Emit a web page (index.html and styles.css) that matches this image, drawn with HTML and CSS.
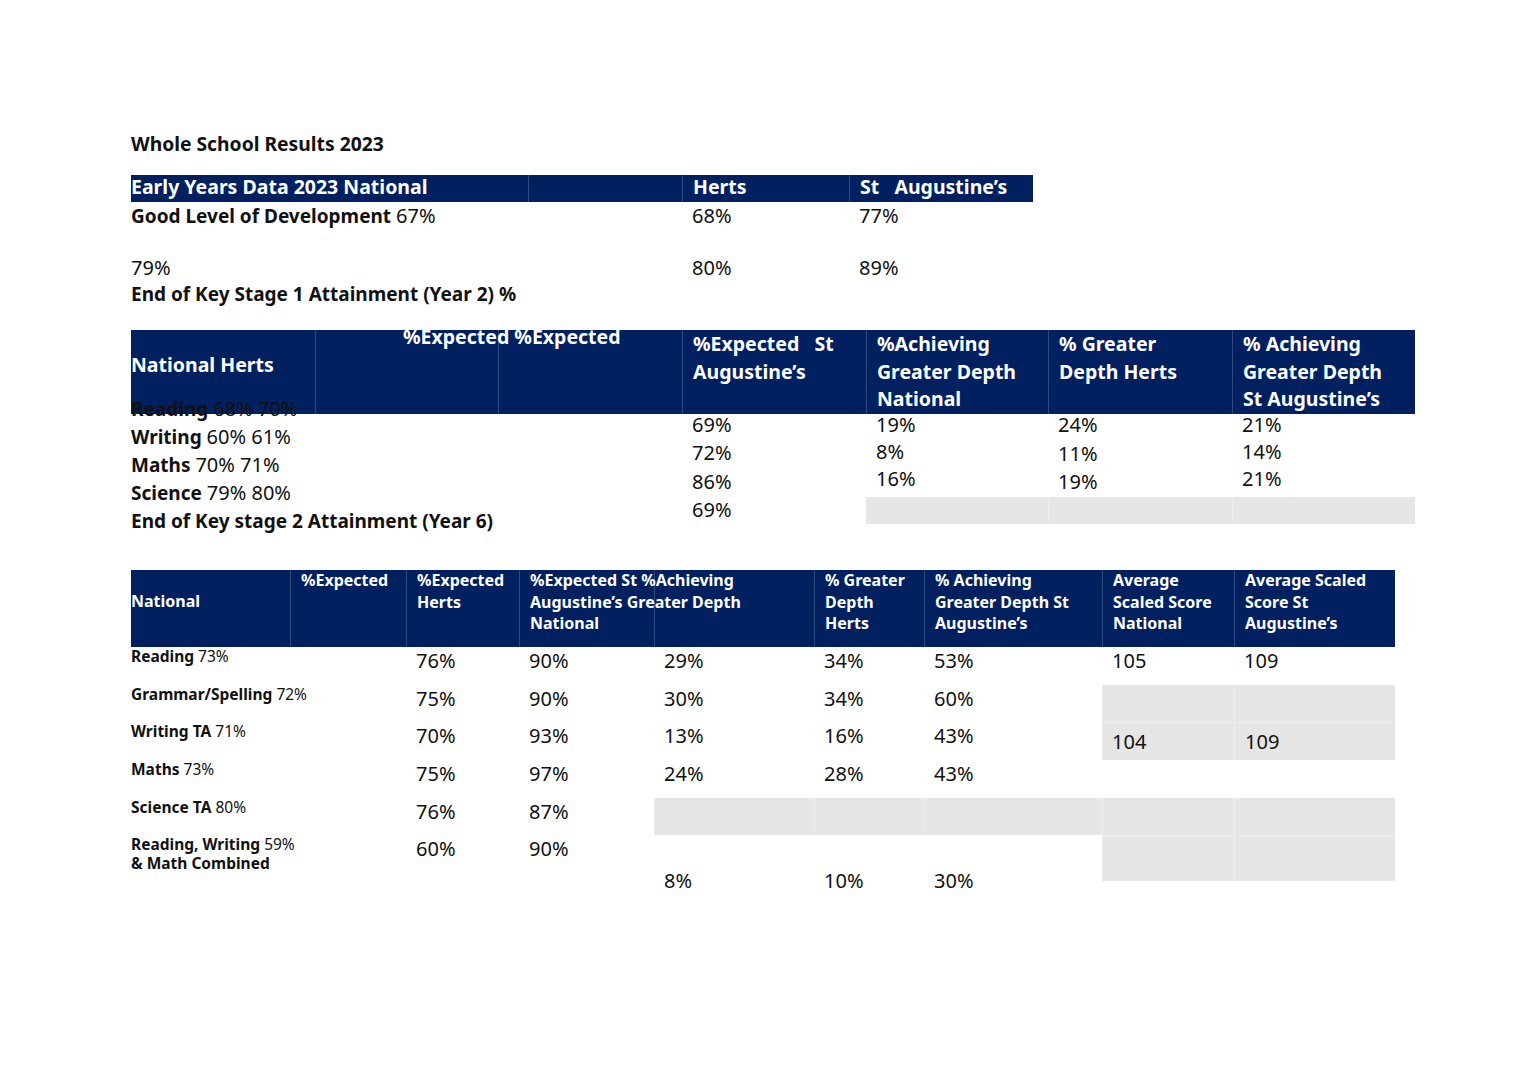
FILE: index.html
```html
<!DOCTYPE html>
<html lang="en">
<head>
<meta charset="utf-8">
<title>Whole School Results 2023</title>
<link rel="stylesheet" href="styles.css">
</head>
<body>
<div class="page">
  <h1 class="title">Whole School Results 2023</h1>

  <section class="t1">
    <div class="t1-head cols1">
      <div class="hc">Early Years Data 2023 National</div>
      <div class="hc"></div>
      <div class="hc pad">Herts</div>
      <div class="hc pad">St&nbsp;&nbsp; Augustine’s</div>
    </div>
    <div class="t1-body cols1">
      <div class="lbl"><b>Good Level of Development</b> <span class="num">67%</span></div>
      <div></div>
      <div class="num pad">68%</div>
      <div class="num pad">77%</div>
      <div class="num">79%</div>
      <div></div>
      <div class="num pad">80%</div>
      <div class="num pad">89%</div>
    </div>
    <p class="subhead">End of Key Stage 1 Attainment (Year 2) %</p>
  </section>

  <section class="t2">
    <div class="t2-head cols2">
      <div class="hc h2-first">National Herts</div>
      <div class="hc h2-exp">%Expected %Expected</div>
      <div class="hc"></div>
      <div class="hc pad">%Expected&nbsp;&nbsp; St<br>Augustine’s</div>
      <div class="hc pad">%Achieving<br>Greater Depth<br>National</div>
      <div class="hc pad">% Greater<br>Depth Herts</div>
      <div class="hc pad">% Achieving<br>Greater Depth<br>St Augustine’s</div>
    </div>
    <div class="t2-body cols2">
      <div class="t2-left">
        <div><b>Reading</b> <span class="num">68% 70%</span></div>
        <div><b>Writing</b> <span class="num">60% 61%</span></div>
        <div><b>Maths</b> <span class="num">70% 71%</span></div>
        <div><b>Science</b> <span class="num">79% 80%</span></div>
        <div><b>End of Key stage 2 Attainment (Year 6)</b></div>
      </div>
      <div class="num pad t2-c4">69%<br>72%<br>86%<br>69%</div>
      <div class="num pad t2-cv lh27">19%<br>8%<br>16%</div>
      <div class="num pad t2-cv lh28">24%<br>11%<br>19%</div>
      <div class="num pad t2-cv lh27">21%<br>14%<br>21%</div>
      <div class="gray"></div>
      <div class="gray"></div>
      <div class="gray"></div>
    </div>
  </section>

  <section class="t3">
    <div class="t3-head cols3">
      <div class="hc h3-first">National</div>
      <div class="hc pad">%Expected</div>
      <div class="hc pad">%Expected<br>Herts</div>
      <div class="hc pad">%Expected St %Achieving<br>Augustine’s Greater Depth<br>National</div>
      <div class="hc"></div>
      <div class="hc pad">% Greater<br>Depth<br>Herts</div>
      <div class="hc pad">% Achieving<br>Greater Depth St<br>Augustine’s</div>
      <div class="hc pad">Average<br>Scaled Score<br>National</div>
      <div class="hc pad">Average Scaled<br>Score St<br>Augustine’s</div>
    </div>
    <div class="t3-body cols3">
      <div class="t3-lbl"><b>Reading</b> <span>73%</span></div>
      <div class="v">76%</div><div class="v">90%</div><div class="v">29%</div><div class="v">34%</div><div class="v">53%</div><div class="v">105</div><div class="v">109</div>

      <div class="t3-lbl"><b>Grammar/Spelling</b> <span>72%</span></div>
      <div class="v">75%</div><div class="v">90%</div><div class="v">30%</div><div class="v">34%</div><div class="v">60%</div><div class="gray"></div><div class="gray"></div>

      <div class="t3-lbl"><b>Writing TA</b> <span>71%</span></div>
      <div class="v">70%</div><div class="v">93%</div><div class="v">13%</div><div class="v">16%</div><div class="v">43%</div><div class="gray v tall split">104</div><div class="gray v tall split">109</div>

      <div class="t3-lbl"><b>Maths</b> <span>73%</span></div>
      <div class="v">75%</div><div class="v">97%</div><div class="v">24%</div><div class="v">28%</div><div class="v">43%</div><div></div><div></div>

      <div class="t3-lbl"><b>Science TA</b> <span>80%</span></div>
      <div class="v">76%</div><div class="v">87%</div><div class="gray"></div><div class="gray"></div><div class="gray"></div><div class="gray"></div><div class="gray"></div>

      <div class="t3-lbl"><b>Reading, Writing</b> <span>59%</span><br><b>&amp; Math Combined</b></div>
      <div class="v">60%</div><div class="v">90%</div>
      <div class="v low">8%</div><div class="v low">10%</div><div class="v low">30%</div>
      <div class="gray split"></div><div class="gray split"></div>
    </div>
  </section>
</div>
</body>
</html>
```
FILE: styles.css
```css
body {
  margin: 0;
  background: #ffffff;
  font-family: "Noto Sans", "Open Sans", sans-serif;
  color: #111111;
}

.page {
  padding: 130px 0 60px 131px;
}

.title {
  margin: 0;
  font-size: 19.3px;
  line-height: 27px;
  font-weight: 700;
}

/* shared */
.hc {
  font-weight: 700;
  white-space: nowrap;
  color: #ffffff;
}
.hc + .hc {
  border-left: 1px solid rgba(255, 255, 255, 0.18);
}
.pad {
  padding-left: 10px;
}
.num {
  font-size: 20px;
  font-weight: 400;
}
b {
  font-weight: 700;
}
.gray {
  background: #e6e6e6;
}
.gray + .gray {
  border-left: 1px solid #ededed;
}

/* table 1 */
.cols1 {
  display: grid;
  width: max-content;
  grid-template-columns: 397px 154px 167px 184px;
}
.t1-head {
  margin-top: 18px;
  height: 27px;
  background: #002060;
}
.t1-head .hc {
  font-size: 19.5px;
  line-height: 24px;
}
.t1-body {
  grid-template-rows: 52px 27px;
  line-height: 27px;
  font-size: 19px;
}
.lbl {
  white-space: nowrap;
}
.subhead {
  margin: 0;
  font-size: 19px;
  line-height: 27px;
  font-weight: 700;
}

/* table 2 */
.t2 {
  margin-top: 22px;
}
.cols2 {
  display: grid;
  width: max-content;
  grid-template-columns: 184px 183px 184px 184px 182px 184px 183px;
}
.t2-head {
  height: 84px;
  background: #002060;
}
.t2-head .hc {
  font-size: 19.5px;
  line-height: 27.5px;
}
.t2-head .h2-first {
  padding-top: 21px;
}
.t2-head .h2-exp {
  padding-left: 87px;
  line-height: 14px;
}
.t2-body {
  grid-template-rows: 83px 27px;
}
.t2-left {
  grid-column: span 3;
  grid-row: span 2;
  margin-top: -19px;
  font-size: 19px;
  line-height: 28px;
  white-space: nowrap;
}
.t2-c4 {
  grid-row: span 2;
  margin-top: -3px;
  line-height: 28.3px;
}
.t2-cv {
  margin-top: -3px;
}
.lh27 {
  line-height: 27px;
}
.lh28 {
  line-height: 28.5px;
}

/* table 3 */
.t3 {
  margin-top: 46px;
}
.cols3 {
  display: grid;
  width: max-content;
  grid-template-columns: 159px 116px 113px 135px 160px 110px 178px 132px 161px;
}
.t3-head {
  height: 77px;
  background: #002060;
}
.t3-head .hc {
  font-size: 16px;
  line-height: 21.5px;
}
.t3-head .h3-first {
  padding-top: 21px;
}
.t3-body {
  grid-template-rows: 38px 37px 38px 38px 37px 46px 14px;
}
.t3-lbl {
  grid-column: span 2;
  font-size: 15.5px;
  line-height: 19px;
  white-space: nowrap;
}
.t3-lbl span {
  font-weight: 400;
}
.v {
  font-size: 20px;
  line-height: 27px;
  padding-left: 10px;
}
.tall {
  line-height: 38px;
}
.split {
  border-top: 1px solid #eeeeee;
}
.low {
  grid-row: span 2;
  align-self: end;
  line-height: 28px;
}
```
